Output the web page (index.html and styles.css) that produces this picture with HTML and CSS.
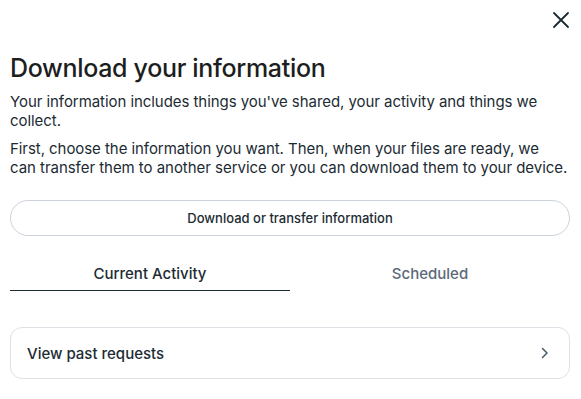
FILE: index.html
```html
<!DOCTYPE html>
<html>
<head>
<meta charset="utf-8">
<link rel="stylesheet" href="styles.css">
</head>
<body>
<div class="dialog">
  <div class="topbar">
    <button class="close" aria-label="Close">
      <svg width="18" height="18" viewBox="0 0 18 18"><path d="M2 2 L16 16 M16 2 L2 16" stroke="#1c2b33" stroke-width="1.8" stroke-linecap="round"/></svg>
    </button>
  </div>
  <h1 class="title">Download your information</h1>
  <p class="text">Your information includes things you've shared, your activity and things we collect.</p>
  <p class="text">First, choose the information you want. Then, when your files are ready, we<br><span class="snug">can transfer them to another service or you can download them to your device.</span></p>
  <button class="pill">Download or transfer information</button>
  <div class="tabs">
    <div class="tab active">Current Activity</div>
    <div class="tab">Scheduled</div>
  </div>
  <div class="card">
    <span>View past requests</span>
    <svg width="8" height="12" viewBox="0 0 8 12"><path d="M1.5 1.5 L6 6 L1.5 10.5" fill="none" stroke="#465a69" stroke-width="1.5" stroke-linecap="round" stroke-linejoin="round"/></svg>
  </div>
</div>
</body>
</html>
```
FILE: styles.css
```css
html, body {
  margin: 0;
  padding: 0;
  background: #fff;
}
body {
  font-family: "Inter", "Noto Sans", sans-serif;
  color: #1c2b33;
}
.dialog {
  padding: 0 11px 0 10px;
}
.topbar {
  display: flex;
  justify-content: flex-end;
  padding-top: 11px;
  height: 40px;
  box-sizing: border-box;
}
.close {
  border: 0;
  background: none;
  padding: 0;
  width: 18px;
  height: 18px;
  display: flex;
}
.title {
  margin: 13px 0 0;
  font-size: 25px;
  font-weight: 500;
  line-height: 30px;
  letter-spacing: -0.32px;
  color: #1c1e21;
}
.text {
  margin: 9px 0 0;
  font-size: 15px;
  line-height: 19px;
  letter-spacing: -0.06px;
}
.snug {
  letter-spacing: -0.04px;
  white-space: nowrap;
}
.pill {
  display: block;
  width: 100%;
  height: 36px;
  margin-top: 23px;
  border: 1px solid #cbd2d9;
  border-radius: 18px;
  background: #fff;
  font-family: inherit;
  font-size: 13px;
  font-weight: 500;
  color: #1c2b33;
}
.tabs {
  display: grid;
  grid-template-columns: 1fr 1fr;
  margin-top: 25px;
}
.tab {
  text-align: center;
  font-size: 15px;
  font-weight: 500;
  height: 30px;
  line-height: 26px;
  color: #5b6a78;
  box-sizing: border-box;
}
.tab.active {
  color: #1c2b33;
  border-bottom: 1px solid #1c2b33;
}
.card {
  margin-top: 36px;
  height: 52px;
  box-sizing: border-box;
  border: 1px solid #dde1e6;
  border-radius: 12px;
  display: flex;
  align-items: center;
  justify-content: space-between;
  padding: 0 20px 0 16px;
  font-size: 15px;
  font-weight: 500;
}
```
